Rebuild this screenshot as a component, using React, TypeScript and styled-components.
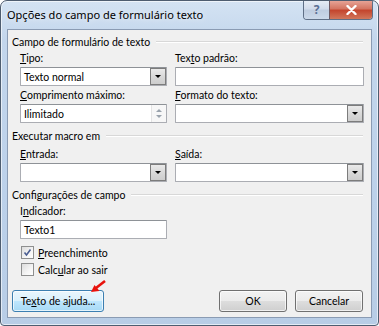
import React from "react";
import styled, { createGlobalStyle } from "styled-components";

const Global = createGlobalStyle`
  html, body { margin: 0; padding: 0; background: #ffffff; }
  body { font-family: Lato, "Noto Sans", "Segoe UI", Arial, sans-serif; }
`;

const Window = styled.div`
  position: relative;
  width: 379px;
  height: 326px;
  box-sizing: border-box;
  border: 1px solid #4e5d70;
  border-radius: 7px 7px 4px 4px;
  background: linear-gradient(180deg, #d4e3f3 0%, #c3d6ec 12%, #bcd1ea 60%, #b8cde6 100%);
  display: flex;
  flex-direction: column;
  overflow: hidden;
  box-shadow: inset 0 0 0 1px rgba(255, 255, 255, 0.6);
`;

const TitleBar = styled.div`
  height: 28px;
  display: flex;
  align-items: flex-start;
  justify-content: space-between;
  padding-left: 6px;
`;

const Title = styled.div`
  font-family: "Noto Sans", "Segoe UI", Arial, sans-serif;
  font-size: 11px;
  line-height: 13px;
  margin-top: 7px;
  color: #000;
  text-shadow: 0 0 6px rgba(255, 255, 255, 0.9);
`;

const CaptionGroup = styled.div`
  display: flex;
  margin-right: 5px;
  margin-top: -1px;
  border: 1px solid #5f6f86;
  border-top: none;
  border-radius: 0 0 4px 4px;
  overflow: hidden;
  height: 19px;
`;

const CaptionButton = styled.div<{ $close?: boolean }>`
  width: ${(p) => (p.$close ? 42 : 25)}px;
  height: 19px;
  display: flex;
  align-items: center;
  justify-content: center;
  background: ${(p) =>
    p.$close
      ? "linear-gradient(180deg, #e9a99c 0%, #d47663 45%, #c4462e 55%, #d1775b 100%)"
      : "linear-gradient(180deg, #e8eef6 0%, #d2dceb 45%, #bfcde0 55%, #cbd9ea 100%)"};
  border-left: ${(p) => (p.$close ? "1px solid #6e5a63" : "none")};
  color: ${(p) => (p.$close ? "#fff" : "#5a6f93")};
  font-family: "Noto Sans", Arial, sans-serif;
  font-size: 12px;
  font-weight: bold;
`;

const Client = styled.div`
  flex: 1;
  margin: 0 6px 7px 6px;
  background: #f0f0f0;
  border: 1px solid #8a9bb3;
  display: flex;
  flex-direction: column;
  padding: 5px 8px 5px 4px;
  font-size: 10.5px;
  color: #000;
`;

const Heading = styled.div<{ $top?: number }>`
  display: flex;
  align-items: center;
  height: 14px;
  margin-top: ${(p) => p.$top ?? 0}px;
  white-space: nowrap;
  &::after {
    content: "";
    flex: 1;
    margin-left: 6px;
    border-top: 1px solid #d8d8d8;
    border-bottom: 1px solid #ffffff;
  }
`;

const Grid = styled.div`
  display: grid;
  grid-template-columns: 147px 189px;
  column-gap: 8px;
  padding-left: 8px;
`;

const Field = styled.div<{ $top?: number }>`
  display: flex;
  flex-direction: column;
  margin-top: ${(p) => p.$top ?? 0}px;
`;

const Label = styled.div`
  height: 14px;
  line-height: 14px;
  margin-bottom: 2px;
  white-space: nowrap;
`;

const U = styled.span`
  text-decoration: underline;
  text-underline-offset: 1px;
`;

const Box = styled.div<{ $w?: number }>`
  position: relative;
  box-sizing: border-box;
  height: 19px;
  width: ${(p) => (p.$w ? `${p.$w}px` : "100%")};
  background: #ffffff;
  border: 1px solid #abadb3;
  border-top-color: #8e9297;
  border-radius: 1px;
  display: flex;
  align-items: center;
  padding-left: 3px;
  line-height: 14px;
`;

const BoxText = styled.span`
  flex: 1;
`;

const DropButton = styled.div`
  box-sizing: border-box;
  width: 16px;
  height: 17px;
  border: 1px solid #7c7c7c;
  background: linear-gradient(180deg, #eaeaea 0%, #d9d9d9 50%, #cdcdcd 100%);
  display: flex;
  align-items: center;
  justify-content: center;
`;

const Tri = styled.div<{ $up?: boolean; $color?: string }>`
  width: 0;
  height: 0;
  border-left: 3px solid transparent;
  border-right: 3px solid transparent;
  ${(p) =>
    p.$up
      ? `border-bottom: 3px solid ${p.$color ?? "#000"};`
      : `border-top: 3px solid ${p.$color ?? "#000"};`}
`;

const Spin = styled.div`
  box-sizing: border-box;
  width: 15px;
  height: 17px;
  display: flex;
  flex-direction: column;
  align-items: center;
  justify-content: space-around;
  border-left: 1px solid #e4e4e4;
  background: #f7f7f7;
  padding: 2px 0;
`;

const CheckRow = styled.label<{ $top?: number }>`
  display: flex;
  align-items: center;
  gap: 4px;
  height: 15px;
  margin-top: ${(p) => p.$top ?? 0}px;
  padding-left: 9px;
`;

const CheckBox = styled.div`
  box-sizing: border-box;
  width: 13px;
  height: 13px;
  border: 1px solid #8e8f8f;
  background: linear-gradient(135deg, #dcdcdc 0%, #f5f5f5 60%, #ffffff 100%);
  display: flex;
  align-items: center;
  justify-content: center;
`;

const ButtonRow = styled.div`
  margin-top: auto;
  display: flex;
  align-items: flex-end;
  gap: 8px;
`;

const Button = styled.div<{ $focus?: boolean; $w: number }>`
  position: relative;
  box-sizing: border-box;
  width: ${(p) => p.$w}px;
  height: 22px;
  border: 1px solid ${(p) => (p.$focus ? "#3c7fb1" : "#707070")};
  border-radius: 3px;
  background: ${(p) =>
    p.$focus
      ? "linear-gradient(180deg, #eaf6fd 0%, #d9f0fc 50%, #bee6fd 51%, #a7d9f5 100%)"
      : "linear-gradient(180deg, #f2f2f2 0%, #ebebeb 50%, #dddddd 51%, #cfcfcf 100%)"};
  box-shadow: inset 0 0 0 1px rgba(255, 255, 255, 0.7);
  display: flex;
  align-items: center;
  justify-content: center;
  font-size: 10.5px;
`;

const Spacer = styled.div`
  flex: 1;
`;

const Arrow = styled.svg`
  position: absolute;
  right: -3px;
  top: -11px;
`;

function DropBox({ text }: { text?: string }) {
  return (
    <Box>
      <BoxText>{text}</BoxText>
      <DropButton>
        <Tri />
      </DropButton>
    </Box>
  );
}

export default function App() {
  return (
    <>
      <Global />
      <Window>
        <TitleBar>
          <Title>Opções do campo de formulário texto</Title>
          <CaptionGroup>
            <CaptionButton>?</CaptionButton>
            <CaptionButton $close>
              <svg width="11" height="10" viewBox="0 0 11 10">
                <path d="M1.5 1 L9.5 9 M9.5 1 L1.5 9" stroke="#fff" strokeWidth="2.4" strokeLinecap="round" />
              </svg>
            </CaptionButton>
          </CaptionGroup>
        </TitleBar>
        <Client>
          <Heading>Campo de formulário de texto</Heading>
          <Grid>
            <Field $top={2}>
              <Label>
                <U>T</U>ipo:
              </Label>
              <DropBox text="Texto normal" />
            </Field>
            <Field $top={2}>
              <Label>
                Tex<U>t</U>o padrão:
              </Label>
              <Box />
            </Field>
            <Field $top={2}>
              <Label>
                <U>C</U>omprimento máximo:
              </Label>
              <Box>
                <BoxText>Ilimitado</BoxText>
                <Spin>
                  <Tri $up $color="#9aa3ad" />
                  <Tri $color="#9aa3ad" />
                </Spin>
              </Box>
            </Field>
            <Field $top={2}>
              <Label>
                <U>F</U>ormato do texto:
              </Label>
              <DropBox />
            </Field>
          </Grid>
          <Heading $top={6}>Executar macro em</Heading>
          <Grid>
            <Field $top={4}>
              <Label>
                <U>E</U>ntrada:
              </Label>
              <DropBox />
            </Field>
            <Field $top={4}>
              <Label>
                <U>S</U>aída:
              </Label>
              <DropBox />
            </Field>
          </Grid>
          <Heading $top={6}>Configurações de campo</Heading>
          <Grid>
            <Field $top={2}>
              <Label>
                I<U>n</U>dicador:
              </Label>
              <Box>
                <BoxText>Texto1</BoxText>
              </Box>
            </Field>
          </Grid>
          <CheckRow $top={6}>
            <CheckBox>
              <svg width="9" height="9" viewBox="0 0 9 9">
                <path d="M1.5 4.5 L3.5 7 L7.5 1.5" stroke="#4b5e92" strokeWidth="1.6" fill="none" />
              </svg>
            </CheckBox>
            <span>
              <U>P</U>reenchimento
            </span>
          </CheckRow>
          <CheckRow $top={2}>
            <CheckBox />
            <span>
              Calc<U>u</U>lar ao sair
            </span>
          </CheckRow>
          <ButtonRow>
            <Button $focus $w={92}>
              Te<U>x</U>to de ajuda...
              <Arrow width="16" height="14" viewBox="0 0 16 14">
                <path d="M15 1 L6 8" stroke="#e8120c" strokeWidth="2.6" />
                <path d="M1 12 L9.5 11 L4.5 5 Z" fill="#e8120c" />
              </Arrow>
            </Button>
            <Spacer />
            <Button $w={68}>OK</Button>
            <Button $w={68}>Cancelar</Button>
          </ButtonRow>
        </Client>
      </Window>
    </>
  );
}
